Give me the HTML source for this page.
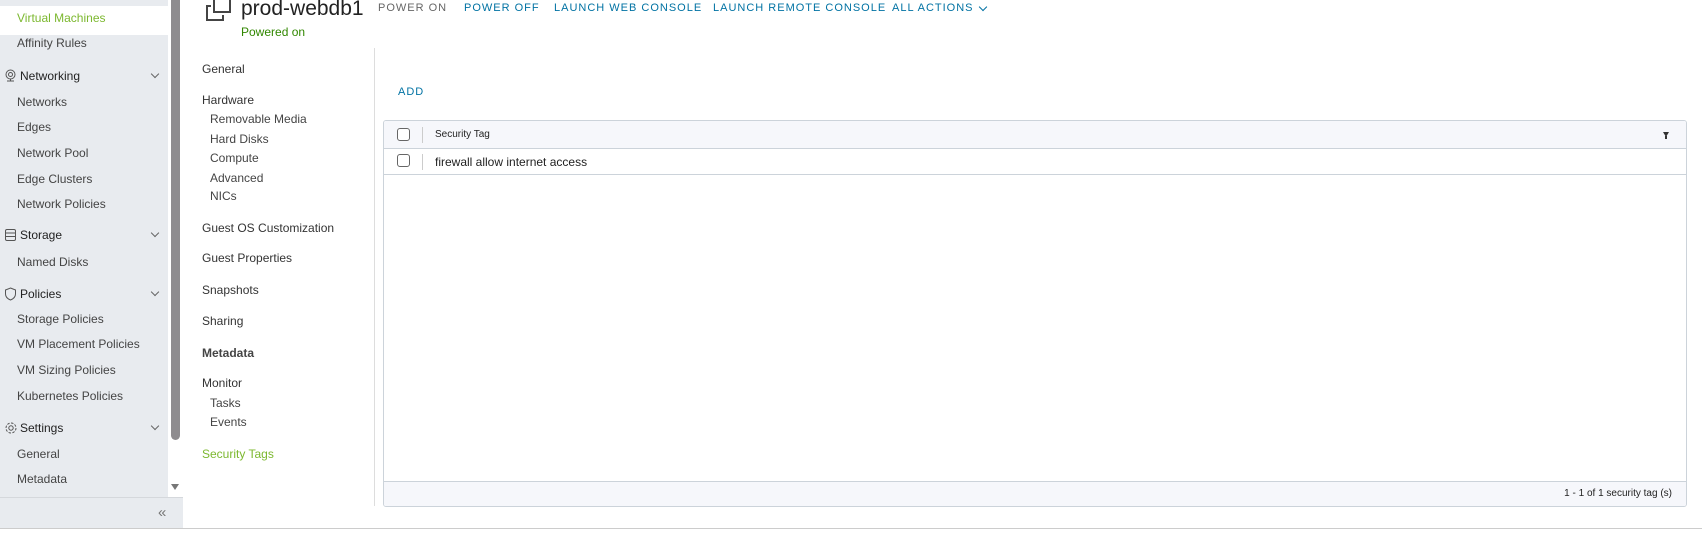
<!DOCTYPE html>
<html><head><meta charset="utf-8"><style>
*{margin:0;padding:0;box-sizing:border-box}
body{width:1702px;height:536px;background:#fff;font-family:"Liberation Sans",sans-serif;color:#333;position:relative;overflow:hidden}
.a{position:absolute;white-space:nowrap}
.sb{position:absolute;left:0;top:0;width:168px;height:497px;background:#e8ebef}
.si{font-size:12px;color:#444;left:17px}
.sh{font-size:12px;color:#222;left:20px}
.chev{left:152px;width:6px;height:6px;border-right:1.2px solid #666;border-bottom:1.2px solid #666;transform:rotate(45deg)}
.nv{font-size:12px;color:#333;left:202px}
.ns{font-size:12px;color:#444;left:210px}
.act{font-size:11px;letter-spacing:1px;color:#0072a3}
.cb{position:absolute;left:397px;width:13px;height:13px;border:1px solid #666;border-radius:3px;background:#fff}
</style></head><body>
<div class="sb"></div>
<div class="a" style="left:0;top:6px;width:168px;height:29px;background:#fff"></div>
<div class="a" style="left:168px;top:0;width:14px;height:497px;background:#fff"></div>
<div class="a" style="left:171px;top:0;width:9px;height:440px;background:#8e8c8f;border-radius:0 0 5px 5px"></div>
<div class="a" style="left:171px;top:484px;width:0;height:0;border-left:4.5px solid transparent;border-right:4.5px solid transparent;border-top:6px solid #777"></div>
<div class="a" style="left:0;top:497px;width:183px;height:31px;background:#e8ebef;border-top:1px solid #d5d8dc"></div>
<div class="a" style="left:158px;top:504px;font-size:15px;color:#777">«</div>
<div class="a" style="left:0;top:528px;width:1702px;height:1px;background:#ccc"></div>

<div class="a si" style="top:11px;color:#7cb82f">Virtual Machines</div>
<div class="a si" style="top:36px">Affinity Rules</div>
<svg class="a" style="left:4px;top:69px" width="13" height="13" viewBox="0 0 13 13" fill="none" stroke="#555"><circle cx="6.5" cy="5.5" r="4.5"/><circle cx="6.5" cy="5.5" r="2"/><path d="M3 12h7M6.5 10v2"/></svg>
<div class="a sh" style="top:69px">Networking</div><div class="a chev" style="top:71px"></div>
<div class="a si" style="top:95px">Networks</div>
<div class="a si" style="top:120px">Edges</div>
<div class="a si" style="top:146px">Network Pool</div>
<div class="a si" style="top:172px">Edge Clusters</div>
<div class="a si" style="top:197px">Network Policies</div>
<svg class="a" style="left:4px;top:228px" width="13" height="14" viewBox="0 0 13 14" fill="none" stroke="#555"><rect x="1.5" y="1.5" width="10" height="11" rx="1.5"/><path d="M1.5 5h10M1.5 8.5h10"/></svg>
<div class="a sh" style="top:228px">Storage</div><div class="a chev" style="top:230px"></div>
<div class="a si" style="top:255px">Named Disks</div>
<svg class="a" style="left:4px;top:287px" width="13" height="14" viewBox="0 0 13 14" fill="none" stroke="#555"><path d="M6.5 1L11.5 3v4c0 3-2.5 5-5 6-2.5-1-5-3-5-6V3z"/></svg>
<div class="a sh" style="top:287px">Policies</div><div class="a chev" style="top:289px"></div>
<div class="a si" style="top:312px">Storage Policies</div>
<div class="a si" style="top:337px">VM Placement Policies</div>
<div class="a si" style="top:363px">VM Sizing Policies</div>
<div class="a si" style="top:389px">Kubernetes Policies</div>
<svg class="a" style="left:4px;top:421px" width="14" height="14" viewBox="0 0 14 14" fill="none" stroke="#555"><circle cx="7" cy="7" r="2.2"/><circle cx="7" cy="7" r="5" stroke-dasharray="2.5 1.4"/></svg>
<div class="a sh" style="top:421px">Settings</div><div class="a chev" style="top:423px"></div>
<div class="a si" style="top:447px">General</div>
<div class="a si" style="top:472px">Metadata</div>

<svg class="a" style="left:205px;top:0" width="27" height="22" viewBox="0 0 27 22" fill="none" stroke="#444" stroke-width="2"><rect x="9" y="-2" width="16" height="14"/><path d="M6 6H2v14h16v-5"/></svg>
<div class="a" style="left:241px;top:-3px;font-size:21px;color:#222">prod-webdb1</div>
<div class="a" style="left:241px;top:25px;font-size:12px;color:#318700">Powered on</div>
<div class="a act" style="left:378px;top:2px;color:#666">POWER ON</div>
<div class="a act" style="left:464px;top:2px">POWER OFF</div>
<div class="a act" style="left:554px;top:2px">LAUNCH WEB CONSOLE</div>
<div class="a act" style="left:713px;top:2px">LAUNCH REMOTE CONSOLE</div>
<div class="a act" style="left:892px;top:2px">ALL ACTIONS</div>
<div class="a" style="left:980px;top:4px;width:6px;height:6px;border-right:1.3px solid #0072a3;border-bottom:1.3px solid #0072a3;transform:rotate(45deg)"></div>

<div class="a" style="left:374px;top:48px;width:1px;height:458px;background:#ddd"></div>
<div class="a nv" style="top:62px">General</div>
<div class="a nv" style="top:93px">Hardware</div>
<div class="a ns" style="top:112px">Removable Media</div>
<div class="a ns" style="top:132px">Hard Disks</div>
<div class="a ns" style="top:151px">Compute</div>
<div class="a ns" style="top:171px">Advanced</div>
<div class="a ns" style="top:189px">NICs</div>
<div class="a nv" style="top:221px">Guest OS Customization</div>
<div class="a nv" style="top:251px">Guest Properties</div>
<div class="a nv" style="top:283px">Snapshots</div>
<div class="a nv" style="top:314px">Sharing</div>
<div class="a nv" style="top:346px;font-weight:bold;color:#444">Metadata</div>
<div class="a nv" style="top:376px">Monitor</div>
<div class="a ns" style="top:396px">Tasks</div>
<div class="a ns" style="top:415px">Events</div>
<div class="a nv" style="top:447px;color:#7cb82f">Security Tags</div>

<div class="a act" style="left:398px;top:86px">ADD</div>
<div class="a" style="left:383px;top:120px;width:1304px;height:387px;border:1px solid #ccd3da;border-radius:3px;overflow:hidden">
 <div class="a" style="left:0;top:0;width:100%;height:28px;background:#f6f7fb;border-bottom:1px solid #ccd3da"></div>
 <div class="a" style="left:0;top:28px;width:100%;height:26px;border-bottom:1px solid #ccd3da"></div>
 <div class="a" style="left:0;top:360px;width:100%;height:27px;background:#f6f7fb;border-top:1px solid #ccd3da"></div>
 <div class="a" style="left:38px;top:6px;width:1px;height:16px;background:#ccc"></div>
 <div class="a" style="left:38px;top:33px;width:1px;height:16px;background:#ccc"></div>
 <div class="a" style="left:51px;top:8px;font-size:10px;color:#222">Security Tag</div>
 <div class="a" style="left:51px;top:34px;font-size:12px;color:#222">firewall allow internet access</div>
 <div class="a" style="left:1279px;top:11px;width:0;height:0;border-left:3.5px solid transparent;border-right:3.5px solid transparent;border-top:5px solid #333"></div>
 <div class="a" style="left:1281px;top:15px;width:2px;height:3px;background:#333"></div>
 <div class="a" style="right:14px;top:367px;font-size:10px;color:#222">1 - 1 of 1 security tag (s)</div>
</div>
<div class="cb" style="top:128px"></div>
<div class="cb" style="top:154px"></div>
</body></html>
